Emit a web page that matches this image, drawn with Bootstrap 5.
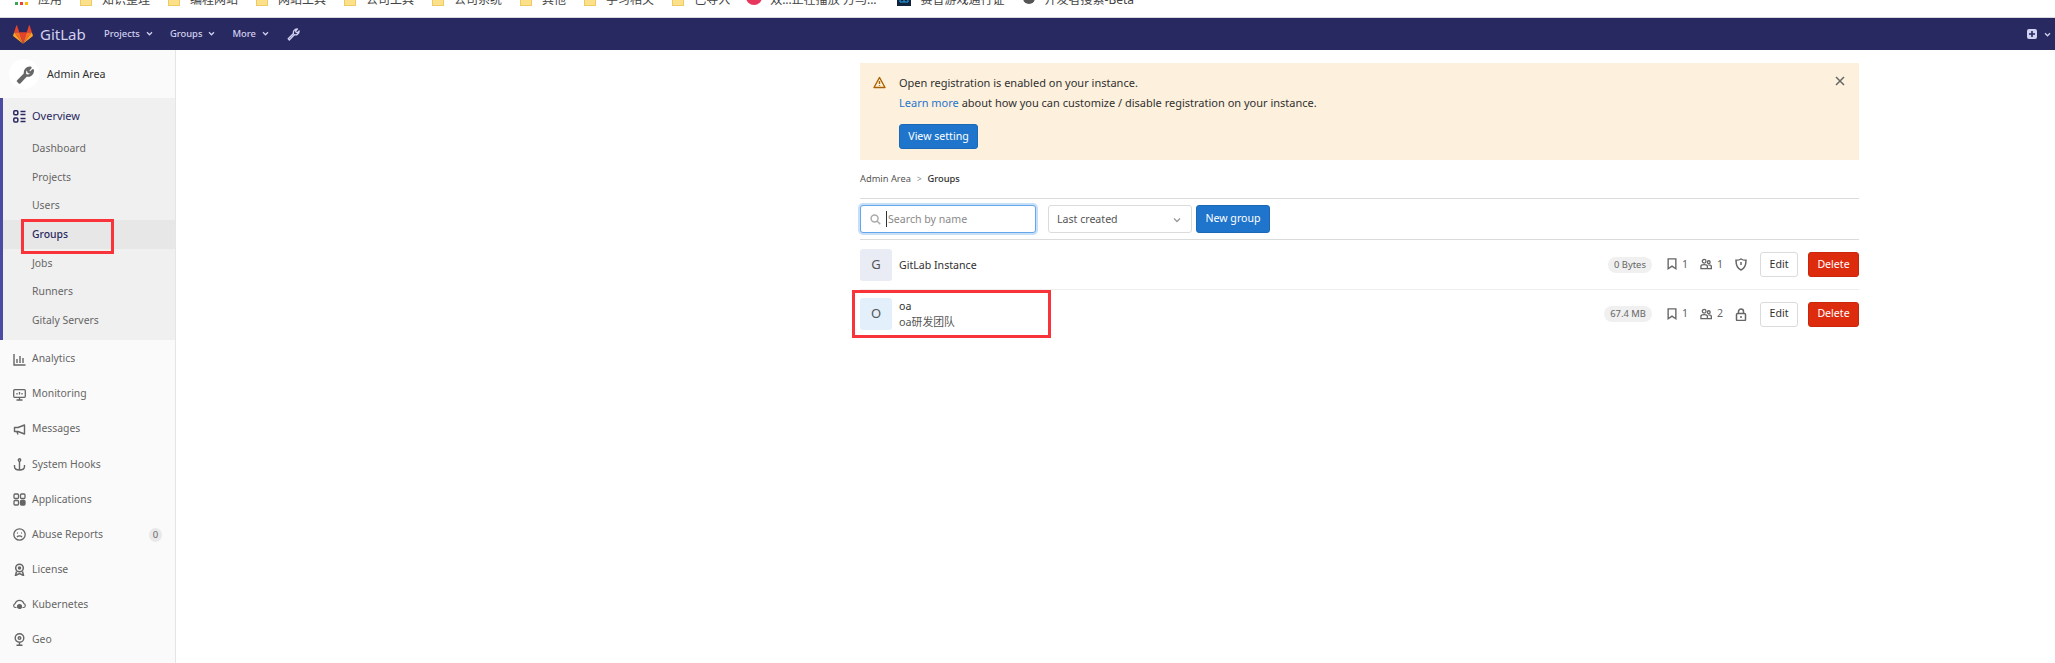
<!DOCTYPE html>
<html>
<head>
  <meta charset="UTF-8" />
  <title>Groups · Admin Area · GitLab</title>
  <link href="https://cdn.jsdelivr.net/npm/bootstrap@5.3.0/dist/css/bootstrap.min.css" rel="stylesheet" />
  <style>
    html, body { height: 663px; overflow: hidden; }
    body { font-family: "Noto Sans", "Noto Sans CJK SC", sans-serif; font-size: 10.6px; color: #303030; background: #fff; position: relative; }

    /* browser bookmarks bar, cut off at the top */
    .bm-bar { height: 18px; border-bottom: 1px solid #d8d8de; overflow: hidden; padding-left: 15px; font-size: 12px; line-height: 12px; color: #444; }
    .bm-item { display: flex; align-items: center; gap: 10px; margin-top: -6px; margin-right: 18px; height: 12px; white-space: nowrap; flex: none; }
    .bm-fav { gap: 8px; margin-left: -2px; margin-right: 20px; }
    .bm-folder { width: 12px; height: 12px; background: #fce08a; border: 1px solid #eecb62; display: block; }

    /* top nav */
    .top-nav.navbar { height: 32px; background: #292961; padding: 0 4px 0 13px; color: #d1d1f0; }
    .brand-name { font-size: 15px; color: #d1d1f0; margin: 0 0 0 7px; width: 64px; }
    .top-link { font-size: 9.4px; font-weight: 500; color: #d1d1f0; text-decoration: none; display: flex; align-items: center; gap: 6px; margin-right: 17px; }
    .nav-right { gap: 7px; }

    .page-row { height: 613px; }

    /* sidebar */
    .side-bar { width: 176px; flex: none; background: #fafafa; border-right: 1px solid #e5e5e5; color: #666; height: 613px; overflow: hidden; font-size: 10.4px; }
    .side-head { height: 48px; padding-left: 9px; color: #303030; gap: 8px; font-size: 10.7px; }
    .side-avatar { width: 30px; height: 30px; border-radius: 50%; background: #fff; display: flex; align-items: center; justify-content: center; color: #666; }
    .side-open { background: #f0f0f0; border-left: 3px solid #4b4ba3; height: 242px; }
    .side-top { height: 36px; padding-left: 10px; gap: 6px; color: #292961; font-size: 11px; }
    .side-sub { display: block; height: 28.7px; line-height: 28.7px; padding-left: 29px; color: #666; text-decoration: none; }
    .side-sub.on { background: #e7e7e7; color: #292961; font-weight: 500; }
    .side-list { padding-top: 1.5px; }
    .side-link { height: 35.1px; padding-left: 13px; gap: 6px; color: #666; text-decoration: none; }
    .side-count { margin-left: auto; margin-right: 13px; width: 13px; height: 14px; border-radius: 7px; background: #e9e9e9; font-size: 9.5px; text-align: center; line-height: 14px; color: #666; }
    .side-icon { width: 13px; height: 13px; flex: none; }

    /* main */
    .main-col { padding: 13px 196px 0 684px; flex: 1; min-width: 0; }
    .reg-alert { background: #fdf1dd; height: 97px; padding: 10px 13px; border: 0; border-radius: 0; margin: 0; color: #303030; gap: 13px; position: relative; font-size: 11px; }
    .reg-alert a { color: #1f75cb; text-decoration: none; }
    .alert-ico { margin-top: 3px; flex: none; }
    .reg-line { line-height: 20px; margin: 0; }
    .btn-blue { background: #1f75cb; border: 1px solid #1b69b6; color: #fff; font-size: 10.6px; padding: 0; height: 25px; line-height: 23px; width: 79px; border-radius: 3px; margin-top: 11px; display: block; }
    .alert-x { position: absolute; right: 14px; top: 13px; color: #666; }
    .crumbs { height: 39px; border-bottom: 1px solid #dbdbdb; margin: 0; font-size: 9.3px; }
    .crumbs a { color: #555; text-decoration: none; }
    .crumb-sep { margin: 0 6px; color: #888; font-size: 8px; }
    .crumb-now { color: #303030; font-weight: 500; }
    .tool-row { height: 41px; border-bottom: 1px solid #dbdbdb; padding-top: 6px; }
    .search-box { width: 176px; height: 28px; border: 1px solid #63a6e9; border-radius: 3px; box-shadow: 0 0 0 2px #c7dff7; padding-left: 9px; gap: 5px; color: #999; margin-right: 12px; background: #fff; }
    .search-box input { border: 0; outline: 0; font-size: 10.6px; flex: 1; min-width: 0; padding: 0 0 0 1px; border-left: 1px solid #303030; height: 16px; font-family: inherit; }
    .search-box input::placeholder { color: #8a8a8a; }
    .sort-box { width: 144px; height: 28px; border: 1px solid #dbdbdb; border-radius: 3px; padding: 2px 10px 0 8px; margin-right: 4px; color: #555; }
    .new-btn { background: #1f75cb; border: 1px solid #1b69b6; color: #fff; font-size: 10.6px; height: 28px; width: 74px; padding: 0; border-radius: 3px; }
    .group-row { height: 50px; border-bottom: 1px solid #eee; }
    .group-row:last-child { border-bottom: 0; height: 48px; }
    .group-ava { width: 32px; height: 32px; border-radius: 3px; font-size: 13px; color: #555; display: flex; align-items: center; justify-content: center; margin-right: 7px; flex: none; }
    .ava-g { background: #e9ebf5; }
    .ava-o { background: #e3f0fb; }
    .group-name { color: #303030; line-height: 16px; }
    .group-desc { color: #555; line-height: 16px; font-size: 10.8px; }
    .size-pill { background: #f0f0f0; color: #666; font-size: 9.4px; height: 16px; line-height: 16px; padding: 0 6px; border-radius: 8px; margin-right: 15px; }
    .stat-item { color: #666; gap: 5px; margin-right: 12px; font-size: 10.6px; }
    .edit-btn { width: 38px; height: 25px; padding: 0; font-size: 10.6px; border: 1px solid #dbdbdb; border-radius: 3px; background: #fff; color: #303030; margin-left: 13px; margin-right: 10px; }
    .del-btn { width: 51px; height: 25px; padding: 0; font-size: 10.6px; border: 1px solid #c9260c; border-radius: 3px; background: #dd2b0e; color: #fff; }

    /* red annotation boxes drawn over the screenshot */
    .mark-box { position: absolute; border: 3px solid #f8333a; pointer-events: none; }
    .mark-groups { left: 21px; top: 219px; width: 93px; height: 35px; }
    .mark-oa { left: 852px; top: 290px; width: 199px; height: 48px; }
  </style>
</head>
<body>
  <div class="bm-bar d-flex">
    <div class="bm-item">
      <svg width="13" height="12" viewBox="0 0 13 12"><rect x="0" y="8" width="3" height="3" fill="#34a853"/><rect x="5" y="8" width="3" height="3" fill="#ea4335"/><rect x="10" y="8" width="3" height="3" fill="#fbbc05"/></svg>
      <span>应用</span>
    </div>
    <div class="bm-item"><i class="bm-folder"></i><span>知识整理</span></div>
    <div class="bm-item"><i class="bm-folder"></i><span>编程网站</span></div>
    <div class="bm-item"><i class="bm-folder"></i><span>网站工具</span></div>
    <div class="bm-item"><i class="bm-folder"></i><span>公司工具</span></div>
    <div class="bm-item"><i class="bm-folder"></i><span>公司系统</span></div>
    <div class="bm-item"><i class="bm-folder"></i><span>其他</span></div>
    <div class="bm-item"><i class="bm-folder"></i><span>学习相关</span></div>
    <div class="bm-item"><i class="bm-folder"></i><span>已导入</span></div>
    <div class="bm-item bm-fav">
      <svg width="16" height="12" viewBox="0 0 16 12"><circle cx="8" cy="3" r="8" fill="#e8365d"/><rect x="3.500" y="2" width="9" height="3" rx="1.500" fill="#fff"/></svg>
      <span>双...正在播放 万马...</span>
    </div>
    <div class="bm-item">
      <svg width="14" height="12" viewBox="0 0 14 12"><rect width="14" height="12" fill="#10243e"/><path d="M3 0v8h8V0M7 0v8" stroke="#22a7f0" fill="none"/></svg>
      <span>赛普游戏通行证</span>
    </div>
    <div class="bm-item">
      <svg width="12" height="12" viewBox="0 0 12 12"><circle cx="6" cy="4" r="6" fill="#555"/><circle cx="6" cy="4" r="2" fill="#fff"/></svg>
      <span>开发者搜索-Beta</span>
    </div>
  </div>

  <nav class="top-nav navbar flex-nowrap justify-content-start">
    <svg width="20" height="19" viewBox="0 0 36 34">
      <path d="M18 33.5 24.6 13H11.4z" fill="#e24329"/>
      <path d="M18 33.5 11.4 13H2z" fill="#fc6d26"/>
      <path d="M2 13 .2 18.9c-.2.5 0 1.100.5 1.400L18 33.500z" fill="#fca326"/>
      <path d="M2 13h9.400L7.300 1c-.2-.6-1.100-.6-1.300 0z" fill="#e24329"/>
      <path d="M18 33.500 24.600 13H34z" fill="#fc6d26"/>
      <path d="M34 13l1.800 5.900c.2.500 0 1.100-.5 1.400L18 33.500z" fill="#fca326"/>
      <path d="M34 13h-9.400L28.700 1c.2-.6 1.100-.6 1.300 0z" fill="#e24329"/>
    </svg>
    <span class="brand-name">GitLab</span>
    <a class="top-link" href="#">Projects <svg width="7" height="5" viewBox="0 0 8 6"><path d="M1 1.500 4 4.500 7 1.500" stroke="currentColor" stroke-width="1.500" fill="none"/></svg></a>
    <a class="top-link" href="#">Groups <svg width="7" height="5" viewBox="0 0 8 6"><path d="M1 1.500 4 4.500 7 1.500" stroke="currentColor" stroke-width="1.500" fill="none"/></svg></a>
    <a class="top-link" href="#">More <svg width="7" height="5" viewBox="0 0 8 6"><path d="M1 1.500 4 4.500 7 1.500" stroke="currentColor" stroke-width="1.500" fill="none"/></svg></a>
    <a class="top-link" href="#"><svg width="14" height="14" viewBox="0 0 16 16"><path d="M2.500 13.500 8.500 7.500C7.800 5 9.800 2 13 2.300L11 4.500 11.500 6 13 6.500 15 4.500C15.200 7.800 12 9.500 9.500 8.800L3.800 14.800Z" fill="none" stroke="currentColor" stroke-width="1.500" stroke-linejoin="round"/></svg></a>
    <div class="nav-right ms-auto d-flex align-items-center">
      <svg width="10" height="10" viewBox="0 0 10 10"><rect width="10" height="10" rx="2" fill="#d1d1f0"/><path d="M5 2v6M2 5h6" stroke="#292961" stroke-width="1.600"/></svg>
      <svg width="7" height="5" viewBox="0 0 8 6"><path d="M1 1.500 4 4.500 7 1.500" stroke="#d1d1f0" stroke-width="1.500" fill="none"/></svg>
    </div>
  </nav>

  <div class="page-row d-flex">
    <aside class="side-bar">
      <div class="side-head d-flex align-items-center">
        <span class="side-avatar"><svg width="19" height="19" viewBox="0 0 16 16"><path d="M2.500 13.500 8.500 7.500C7.800 5 9.800 2 13 2.300L11 4.500 11.500 6 13 6.500 15 4.500C15.200 7.800 12 9.500 9.500 8.800L3.800 14.800Z" fill="none" stroke="currentColor" stroke-width="2" stroke-linejoin="round"/></svg></span>
        <span>Admin Area</span>
      </div>
      <div class="side-open">
        <div class="side-top d-flex align-items-center">
          <svg class="side-icon" viewBox="0 0 13 13" fill="none" stroke="currentColor" stroke-width="1.500"><rect x=".8" y=".8" width="4" height="4" rx="1"/><rect x=".8" y="8" width="4" height="4" rx="1"/><path d="M7.500 1.500h5M7.500 4.500h5M7.500 8.500h5M7.500 11.500h5"/></svg>
          <span>Overview</span>
        </div>
        <a class="side-sub" href="#">Dashboard</a>
        <a class="side-sub" href="#">Projects</a>
        <a class="side-sub" href="#">Users</a>
        <a class="side-sub on" href="#">Groups</a>
        <a class="side-sub" href="#">Jobs</a>
        <a class="side-sub" href="#">Runners</a>
        <a class="side-sub" href="#">Gitaly Servers</a>
      </div>
      <div class="side-list">
        <a class="side-link d-flex align-items-center" href="#">
          <svg class="side-icon" viewBox="0 0 13 13" fill="none" stroke="currentColor" stroke-width="1.400"><path d="M1 1v11h11.500M4 10V6M7 10V3M10 10V5"/></svg><span>Analytics</span></a>
        <a class="side-link d-flex align-items-center" href="#">
          <svg class="side-icon" viewBox="0 0 13 13" fill="none" stroke="currentColor" stroke-width="1.300"><rect x=".7" y="1.700" width="11.600" height="7.600" rx="1"/><path d="M3.500 12h6M6.500 9.500V12M4 6.500V5M6.500 6.500V4M9 6.500V5"/></svg><span>Monitoring</span></a>
        <a class="side-link d-flex align-items-center" href="#">
          <svg class="side-icon" viewBox="0 0 13 13" fill="none" stroke="currentColor" stroke-width="1.400" stroke-linejoin="round"><path d="M11.500 2v9L5 8.500H1.500v-4H5zM4 9l1 2.500"/></svg><span>Messages</span></a>
        <a class="side-link d-flex align-items-center" href="#">
          <svg class="side-icon" viewBox="0 0 13 13" fill="none" stroke="currentColor" stroke-width="1.400"><circle cx="6.500" cy="2" r="1.200"/><path d="M6.500 3.500V12M1.500 7v1.500c0 2 2 3.500 5 3.500s5-1.500 5-3.500V7"/></svg><span>System Hooks</span></a>
        <a class="side-link d-flex align-items-center" href="#">
          <svg class="side-icon" viewBox="0 0 13 13" fill="none" stroke="currentColor" stroke-width="1.300"><rect x="1" y="1" width="4.500" height="4.500" rx="1"/><rect x="7.500" y="1" width="4.500" height="4.500" rx="1"/><rect x="1" y="7.500" width="4.500" height="4.500" rx="1"/><rect x="7.500" y="7.500" width="4.500" height="4.500" rx="1" fill="currentColor"/></svg><span>Applications</span></a>
        <a class="side-link d-flex align-items-center" href="#">
          <svg class="side-icon" viewBox="0 0 13 13" fill="none" stroke="currentColor" stroke-width="1.300"><circle cx="6.500" cy="6.500" r="5.700"/><path d="M4 9c1.200-1.500 3.800-1.500 5 0M4.200 5h.8M8 5h.8"/></svg><span>Abuse Reports</span><span class="side-count">0</span></a>
        <a class="side-link d-flex align-items-center" href="#">
          <svg class="side-icon" viewBox="0 0 13 13" fill="none" stroke="currentColor" stroke-width="1.500"><circle cx="6.500" cy="5" r="3.800"/><circle cx="6.500" cy="5" r="1" fill="currentColor"/><path d="M3.500 8.500 2.500 12.500 6.500 10.500 10.500 12.500 9.500 8.500"/></svg><span>License</span></a>
        <a class="side-link d-flex align-items-center" href="#">
          <svg class="side-icon" viewBox="0 0 13 13" fill="none" stroke="currentColor" stroke-width="1.200"><path d="M3.500 9.500H2.500a2 2 0 0 1-.4-3.900C2.800 3.500 4.500 2.300 6.500 2.300s3.700 1.200 4.400 3.300a2 2 0 0 1-.4 3.900H9.500"/><circle cx="6.500" cy="8.500" r="2" fill="currentColor"/></svg><span>Kubernetes</span></a>
        <a class="side-link d-flex align-items-center" href="#">
          <svg class="side-icon" viewBox="0 0 13 13" fill="none" stroke="currentColor" stroke-width="1.400"><circle cx="6.500" cy="5" r="4.300"/><circle cx="6.500" cy="5" r="1.300"/><path d="M6.500 9.500v2M3.500 12.300h6"/></svg><span>Geo</span></a>
      </div>
    </aside>

    <main class="main-col">
      <div class="reg-alert alert d-flex" role="alert">
        <svg class="alert-ico" width="13" height="13" viewBox="0 0 13 13" fill="none" stroke="#ab6100" stroke-width="1.400" stroke-linejoin="round"><path d="M6.500 1.500 12 11.500H1zM6.500 5v3M6.500 9.300v.7"/></svg>
        <div>
          <p class="reg-line">Open registration is enabled on your instance.</p>
          <p class="reg-line"><a href="#">Learn more</a> about how you can customize / disable registration on your instance.</p>
          <button class="btn-blue btn" type="button">View setting</button>
        </div>
        <svg class="alert-x" width="10" height="10" viewBox="0 0 10 10"><path d="M1 1l8 8M9 1l-8 8" stroke="currentColor" stroke-width="1.500"/></svg>
      </div>

      <nav class="crumbs d-flex align-items-center">
        <a href="#">Admin Area</a><span class="crumb-sep">&gt;</span><span class="crumb-now">Groups</span>
      </nav>

      <div class="tool-row d-flex">
        <div class="search-box d-flex align-items-center">
          <svg width="11" height="11" viewBox="0 0 12 12" fill="none" stroke="#aaa" stroke-width="1.600"><circle cx="5" cy="5" r="3.800"/><path d="M8 8l3.200 3.200"/></svg>
          <input type="text" placeholder="Search by name" />
        </div>
        <div class="sort-box d-flex align-items-center justify-content-between">
          <span>Last created</span>
          <svg width="8" height="6" viewBox="0 0 8 6"><path d="M1 1.500 4 4.500 7 1.500" stroke="#999" stroke-width="1.300" fill="none"/></svg>
        </div>
        <button class="new-btn btn" type="button">New group</button>
      </div>

      <div class="group-row d-flex align-items-center">
        <div class="group-ava ava-g">G</div>
        <div class="group-name">GitLab Instance</div>
        <div class="ms-auto d-flex align-items-center">
          <span class="size-pill">0 Bytes</span>
          <span class="stat-item d-flex align-items-center">
            <svg width="10" height="12" viewBox="0 0 11 14" fill="none" stroke="currentColor" stroke-width="1.600"><path d="M1 1h9v11.500L5.500 9.500 1 12.500z"/></svg>1</span>
          <span class="stat-item d-flex align-items-center">
            <svg width="12" height="12" viewBox="0 0 13 12" fill="none" stroke="currentColor" stroke-width="1.400"><circle cx="4.500" cy="3" r="2"/><circle cx="9.500" cy="4" r="1.500"/><path d="M1 11V8.500c0-1 1-1.800 3.500-1.800S8 7.500 8 8.500V11zM9 7c2 0 3.300.6 3.300 1.600V11H8"/></svg>1</span>
          <svg width="12" height="13" viewBox="0 0 12 13" fill="none" stroke="#666" stroke-width="1.500"><path d="M6 1c1.500 1 3 1.300 5 1.300C11 8 9 10.800 6 12 3 10.800 1 8 1 2.300 3 2.300 4.500 2 6 1zM6 4v3"/></svg>
          <button class="edit-btn btn" type="button">Edit</button>
          <button class="del-btn btn" type="button">Delete</button>
        </div>
      </div>

      <div class="group-row d-flex align-items-center">
        <div class="group-ava ava-o">O</div>
        <div>
          <div class="group-name">oa</div>
          <div class="group-desc">oa研发团队</div>
        </div>
        <div class="ms-auto d-flex align-items-center">
          <span class="size-pill">67.4 MB</span>
          <span class="stat-item d-flex align-items-center">
            <svg width="10" height="12" viewBox="0 0 11 14" fill="none" stroke="currentColor" stroke-width="1.600"><path d="M1 1h9v11.500L5.500 9.500 1 12.500z"/></svg>1</span>
          <span class="stat-item d-flex align-items-center">
            <svg width="12" height="12" viewBox="0 0 13 12" fill="none" stroke="currentColor" stroke-width="1.400"><circle cx="4.500" cy="3" r="2"/><circle cx="9.500" cy="4" r="1.500"/><path d="M1 11V8.500c0-1 1-1.800 3.500-1.800S8 7.500 8 8.500V11zM9 7c2 0 3.300.6 3.300 1.600V11H8"/></svg>2</span>
          <svg width="12" height="13" viewBox="0 0 12 13" fill="none" stroke="#666" stroke-width="1.500"><rect x="1.500" y="5.500" width="9" height="7" rx="1"/><path d="M3.500 5.500V3.500a2.500 2.500 0 0 1 5 0v2M6 8v2"/></svg>
          <button class="edit-btn btn" type="button">Edit</button>
          <button class="del-btn btn" type="button">Delete</button>
        </div>
      </div>
    </main>
  </div>

  <div class="mark-box mark-groups"></div>
  <div class="mark-box mark-oa"></div>

  <script src="https://cdn.jsdelivr.net/npm/bootstrap@5.3.0/dist/js/bootstrap.bundle.min.js"></script>
</body>
</html>
